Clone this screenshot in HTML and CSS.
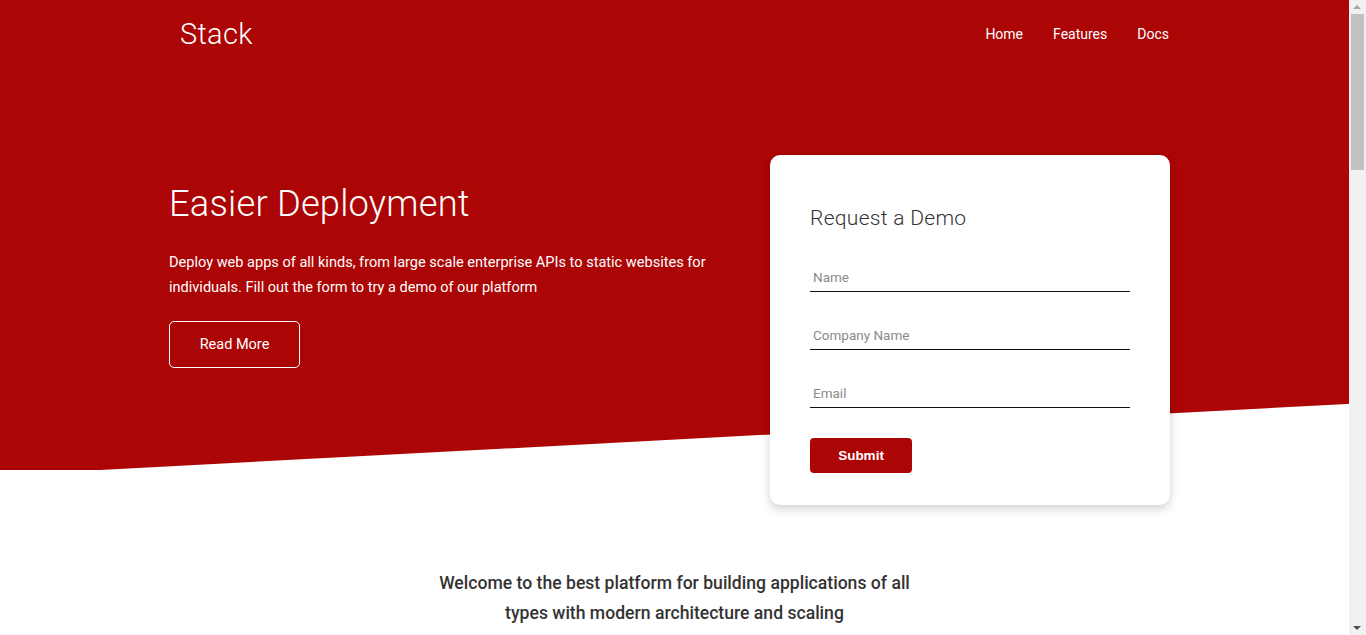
FILE: index.html
```html
<!DOCTYPE html>
<html lang="en">
<head>
<meta charset="utf-8">
<title>Stack</title>
<link rel="stylesheet" href="styles.css">
</head>
<body>
<div class="page">
  <section class="hero">
    <header class="nav container">
      <a class="logo" href="#">Stack</a>
      <nav class="links">
        <a href="#">Home</a>
        <a href="#">Features</a>
        <a href="#">Docs</a>
      </nav>
    </header>
    <div class="hero-body container">
      <div class="hero-text">
        <h1>Easier Deployment</h1>
        <p>Deploy web apps of all kinds, from large scale enterprise APIs to static websites for individuals. Fill out the form to try a demo of our platform</p>
        <a class="btn-outline" href="#">Read More</a>
      </div>
      <form class="card">
        <h3>Request a Demo</h3>
        <input class="field" type="text" placeholder="Name">
        <input class="field" type="text" placeholder="Company Name">
        <input class="field" type="email" placeholder="Email">
        <button class="submit" type="button">Submit</button>
      </form>
    </div>
  </section>
  <section class="welcome">
    <h2>Welcome to the best platform for building applications of all types with modern architecture and scaling</h2>
  </section>
</div>
<div class="scrollbar" aria-hidden="true">
  <span class="sb-up"></span>
  <span class="sb-thumb"></span>
  <span class="sb-down"></span>
</div>
</body>
</html>
```

FILE: styles.css
```css
* { box-sizing: border-box; }
html, body { margin: 0; padding: 0; }
body {
  font-family: Roboto, "Liberation Sans", sans-serif;
  color: #333;
  background: #fff;
}
.page { min-height: 2460px; }
a { text-decoration: none; color: inherit; }

.container {
  width: 1001px;
  margin-left: 169px;
}

.hero {
  position: relative;
  height: 470px;
  color: #fff;
}
.hero::before {
  content: "";
  position: absolute;
  inset: 0;
  background: #ac0505;
  clip-path: polygon(0 0, 100% 0, 100% calc(100% - 67px), 100px 100%, 0 100%);
  z-index: 0;
}
.nav, .hero-body { position: relative; z-index: 1; }

.nav {
  height: 68px;
  display: flex;
  align-items: center;
  justify-content: space-between;
}
.logo {
  font-size: 29px;
  font-weight: 300;
  padding-left: 11px;
  letter-spacing: 0.3px;
}
.links { display: flex; gap: 30px; padding-right: 1px; }
.links a { font-size: 14px; font-weight: 400; }

.hero-body {
  margin-top: 87px;
  display: flex;
  justify-content: space-between;
  align-items: flex-start;
}
.hero-text {
  width: 560px;
  padding-top: 25px;
}
.hero-text h1 {
  margin: 0 0 22px;
  font-size: 36.3px;
  font-weight: 300;
  line-height: 48px;
  letter-spacing: 0.2px;
}
.hero-text p {
  margin: 0 0 21px;
  font-size: 14.55px;
  line-height: 25px;
  font-weight: 400;
}
.btn-outline {
  display: inline-flex;
  align-items: center;
  justify-content: center;
  width: 131px;
  height: 47px;
  border: 1px solid #fff;
  border-radius: 5px;
  font-size: 14.5px;
}

.card {
  width: 400px;
  height: 350px;
  background: #fff;
  border-radius: 10px;
  box-shadow: 0 4px 10px rgba(0,0,0,0.18);
  padding: 48px 40px 0;
  display: flex;
  flex-direction: column;
  align-items: flex-start;
}
.card h3 {
  margin: 0 0 30px;
  font-size: 21px;
  font-weight: 300;
  line-height: 30px;
  color: #333;
  letter-spacing: 0.3px;
}
.field {
  width: 320px;
  height: 29px;
  border: none;
  border-bottom: 1.5px solid #111;
  padding: 0 3px;
  margin: 0 0 29px;
  font-family: Roboto, "Liberation Sans", sans-serif;
  font-size: 13.5px;
  color: #333;
  outline: none;
  background: transparent;
}
.field::placeholder { color: #8a8a8a; }
.submit {
  margin-top: 1px;
  width: 102px;
  height: 35px;
  border: none;
  border-radius: 4px;
  background: #ac0505;
  color: #fff;
  font-family: "Liberation Sans", Arial, sans-serif;
  font-weight: 700;
  font-size: 13.5px;
}

.welcome {
  padding-top: 98px;
  padding-right: 17px;
  display: flex;
  justify-content: center;
}
.welcome h2 {
  margin: 0;
  width: 500px;
  text-align: center;
  font-size: 17.6px;
  font-weight: 500;
  line-height: 30px;
  color: #333;
}

/* decorative replica of the window scrollbar */
.scrollbar {
  position: fixed;
  top: 0;
  right: 0;
  width: 17px;
  height: 100vh;
  background: #f1f1f1;
  z-index: 10;
}
.sb-up, .sb-down {
  position: absolute;
  left: 4px;
  width: 0;
  height: 0;
  border-left: 4px solid transparent;
  border-right: 4px solid transparent;
}
.sb-up { top: 5px; border-bottom: 4px solid #a3a3a3; }
.sb-down { bottom: 5px; border-top: 4px solid #505050; }
.sb-thumb {
  position: absolute;
  top: 14px;
  left: 2px;
  width: 13px;
  height: 156px;
  background: #c1c1c1;
}
```
